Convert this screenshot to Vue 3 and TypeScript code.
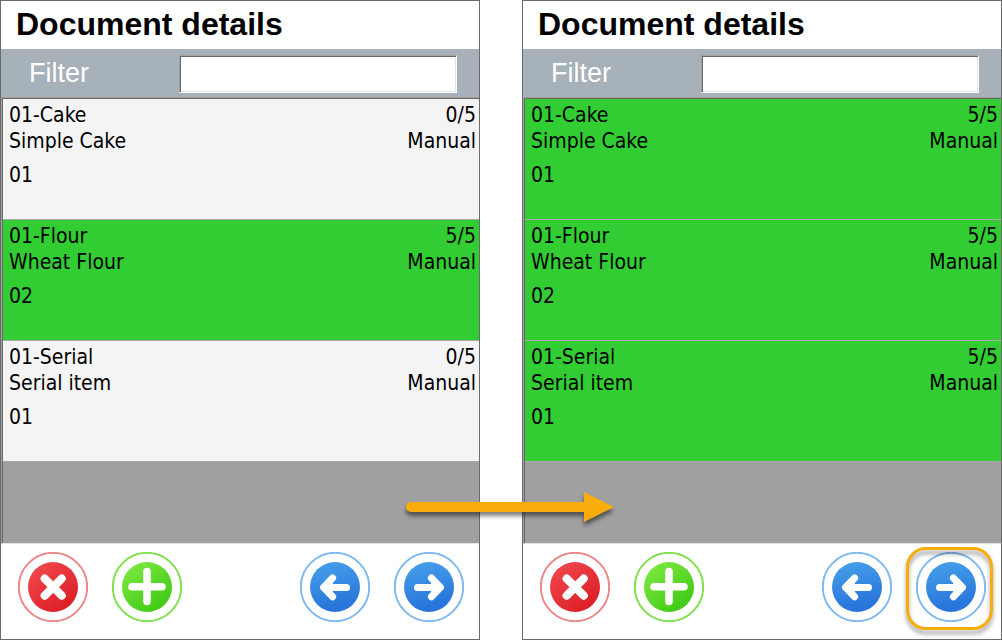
<script setup lang="ts">
import { ref } from 'vue'

interface Item {
  code: string
  name: string
  count: string
  mode: string
  qty: string
  done: boolean
}

interface Panel {
  id: string
  highlightNext: boolean
  items: Item[]
}

function makeItems(counts: string[]): Item[] {
  const base = [
    { code: '01-Cake', name: 'Simple Cake', qty: '01' },
    { code: '01-Flour', name: 'Wheat Flour', qty: '02' },
    { code: '01-Serial', name: 'Serial item', qty: '01' },
  ]
  return base.map((b, i) => ({ ...b, count: counts[i], mode: 'Manual', done: counts[i] === '5/5' }))
}

const panels: Panel[] = [
  { id: 'before', highlightNext: false, items: makeItems(['0/5', '5/5', '0/5']) },
  { id: 'after', highlightNext: true, items: makeItems(['5/5', '5/5', '5/5']) },
]

const filters = ref<Record<string, string>>({ before: '', after: '' })

const actions = [
  { name: 'Cancel', kind: 'red', d: 'M26.7 26.7 L43.7 43.7 M43.7 26.7 L26.7 43.7', width: 8.2 },
  { name: 'Add', kind: 'green', d: 'M35 19.5 V49.5 M20 34.8 H50', width: 7.6 },
  { name: 'Previous', kind: 'blue', d: 'M46.5 35.4 H26 M32.6 26 L23.5 35.4 L32.6 44.8 M27 33.5 L29.5 32 V39 L27 37.5', width: 7 },
  { name: 'Next', kind: 'blue', d: 'M23.5 35.4 H44 M37.4 26 L46.5 35.4 L37.4 44.8 M43 33.5 L40.5 32 V39 L43 37.5', width: 7 },
]
</script>

<template>
  <main class="page">
    <section v-for="panel in panels" :key="panel.id" class="panel">
      <h1 class="title">Document details</h1>
      <div class="filter">
        <label :for="'filter-' + panel.id">Filter</label>
        <input :id="'filter-' + panel.id" v-model="filters[panel.id]" type="text" />
      </div>
      <ul class="list">
        <li v-for="item in panel.items" :key="item.code" class="item" :class="{ done: item.done }">
          <div class="line"><span>{{ item.code }}</span><span>{{ item.count }}</span></div>
          <div class="line"><span>{{ item.name }}</span><span>{{ item.mode }}</span></div>
          <div class="line qty">{{ item.qty }}</div>
        </li>
      </ul>
      <footer class="actions">
        <button
          v-for="action in actions"
          :key="action.name"
          type="button"
          :aria-label="action.name"
          :class="['action', action.name.toLowerCase(), { marked: panel.highlightNext && action.name === 'Next' }]"
        >
          <svg viewBox="0 0 70 70" aria-hidden="true">
            <defs>
              <linearGradient :id="'g-' + panel.id + action.name" x1="0.2" y1="0.1" :x2="action.kind === 'blue' ? 0.4 : 0.85" y2="0.95">
                <stop offset="0" :class="action.kind + '-from'" />
                <stop offset="1" :class="action.kind + '-to'" />
              </linearGradient>
            </defs>
            <circle cx="35" cy="35" r="34.2" class="ring" :class="action.kind + '-ring'" />
            <circle cx="35" cy="35" r="25" :fill="'url(#g-' + panel.id + action.name + ')'" />
            <path :d="action.d" :stroke-width="action.width" class="glyph" />
          </svg>
        </button>
      </footer>
    </section>
    <svg class="arrow" viewBox="0 0 208 32" width="208" height="32" aria-hidden="true">
      <path d="M5 11 H178 V1 L208 16 L178 31 V21 H5 A5 5 0 0 1 5 11 Z" fill="#f8ad0c" />
    </svg>
  </main>
</template>

<style>
body {
  margin: 0;
  background: #fff;
}
</style>

<style scoped>
.page {
  position: relative;
  display: grid;
  grid-template-columns: 1fr 1fr;
  column-gap: 42px;
  min-height: 100vh;
  font-family: "Liberation Sans", Arial, sans-serif;
  color: #000;
}
.panel {
  display: flex;
  flex-direction: column;
  border: 1px solid #6a6a6a;
  background: #fff;
  min-width: 0;
}
.title {
  margin: 0;
  padding: 0 15px 2px;
  font-size: 32px;
  line-height: 46px;
  font-weight: 700;
}
.filter {
  display: flex;
  align-items: flex-end;
  height: 48px;
  box-sizing: border-box;
  padding: 0 22px 4px 28px;
  background: #a7b1ba;
}
.filter label {
  flex: 0 0 151px;
  font-size: 27px;
  line-height: 40px;
  color: #fff;
}
.filter input {
  flex: 1;
  min-width: 0;
  height: 38px;
  box-sizing: border-box;
  margin: 0 0 0 -1px;
  padding: 0 6px;
  border: 1px solid;
  border-color: #a0a0a0 #fff #fff #a0a0a0;
  border-radius: 0;
  background: #fff;
  box-shadow: inset 1px 1px #696969, inset -1px -1px #e3e3e3;
  font: 22px "Liberation Sans", Arial, sans-serif;
  outline: none;
}
.list {
  flex: 1;
  margin: 0;
  padding: 1px 0 0 1px;
  list-style: none;
  background: #a0a0a0;
  border: solid;
  border-width: 1px 0 1px 1px;
  border-color: #a0a0a0 #e3e3e3 #e3e3e3 #a0a0a0;
  box-shadow: inset 1px 1px #696969;
  font-family: "DejaVu Sans Condensed", "Noto Sans", sans-serif;
  font-size: 21px;
}
.item {
  min-height: 117px;
  padding: 3px 3px 0 6px;
  border-bottom: 1px solid #a9a9a9;
  background: #f4f4f4;
}
.item.done {
  background: #32cd32;
}
.line {
  display: flex;
  justify-content: space-between;
  line-height: 26px;
}
.qty {
  margin-top: 8px;
}
.actions {
  display: flex;
  gap: 24px;
  padding: 8px 15px 17px 17px;
}
.action {
  position: relative;
  width: 70px;
  height: 70px;
  padding: 0;
  border: 0;
  background: none;
  cursor: pointer;
}
.action svg {
  display: block;
  width: 70px;
  height: 70px;
}
.previous {
  margin-left: auto;
}
.marked::after {
  content: "";
  position: absolute;
  inset: -5px -7px -8px -10px;
  border: 3px solid #f8ad0c;
  border-radius: 20px;
  filter: drop-shadow(0 4px 2px rgba(0, 0, 0, 0.4));
}
.ring {
  fill: #fff;
  stroke-width: 1.9;
}
.red-ring { stroke: #ec8589; }
.green-ring { stroke: #7de04c; }
.blue-ring { stroke: #7fb8ef; }
.red-from { stop-color: #ee454b; }
.red-to { stop-color: #dc1c24; }
.green-from { stop-color: #78e63e; }
.green-to { stop-color: #3cc812; }
.blue-from { stop-color: #439be8; }
.blue-to { stop-color: #2874db; }
.glyph {
  fill: none;
  stroke: #fff;
  stroke-linecap: round;
  stroke-linejoin: round;
}
.arrow {
  position: absolute;
  left: calc(50% - 95px);
  top: 491px;
  overflow: visible;
  filter: drop-shadow(0 4px 2px rgba(0, 0, 0, 0.5));
}
</style>
